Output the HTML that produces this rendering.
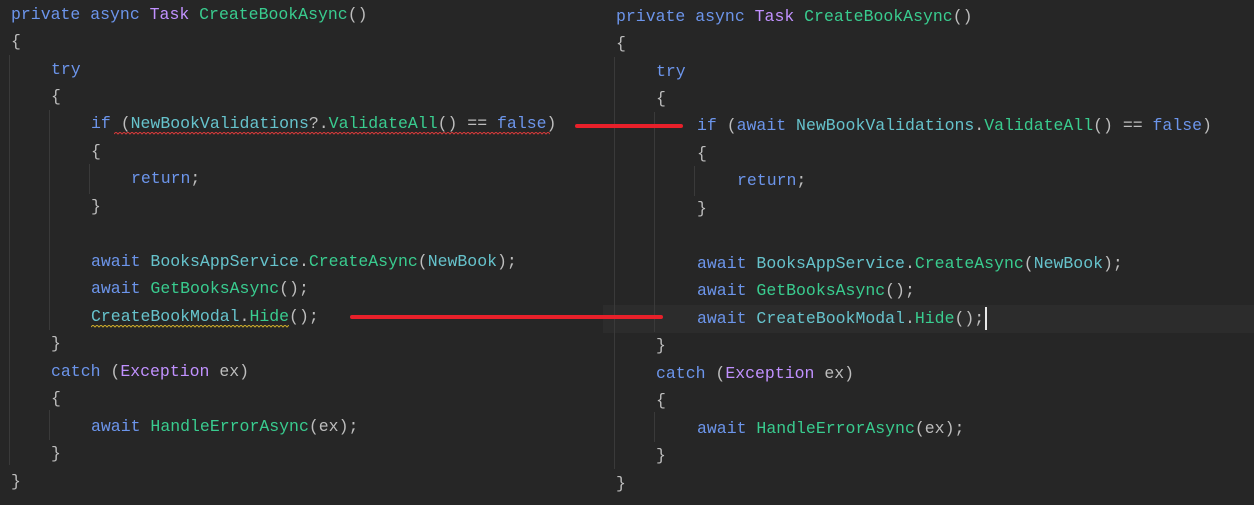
<!DOCTYPE html>
<html><head><meta charset="utf-8"><style>
html,body{margin:0;padding:0;}
body{width:1254px;height:505px;background:#262626;position:relative;overflow:hidden;font-family:"Liberation Mono","DejaVu Sans Mono",monospace;font-size:16.5px;color:#bdbdbd;}
.l{position:absolute;white-space:pre;line-height:20px;height:20px;}
.k{color:#6c95eb}.t{color:#c191ff}.m{color:#39cc8f}.i{color:#66c3cc}
.g{position:absolute;width:1px;background:#3a3a3a;}
.r{position:absolute;height:4px;background:#e8202a;border-radius:2px;}
.sq{position:absolute;height:3px;}
</style></head><body>
<div style="position:absolute;left:603px;top:305px;width:651px;height:28px;background:#2c2c2c"></div>
<!-- guides left -->
<div class="g" style="left:9px;top:55px;height:410px"></div>
<div class="g" style="left:49px;top:110px;height:220px"></div>
<div class="g" style="left:89px;top:164px;height:30px"></div>
<div class="g" style="left:49px;top:410px;height:30px"></div>
<!-- guides right -->
<div class="g" style="left:614px;top:57px;height:412px"></div>
<div class="g" style="left:654px;top:112px;height:220px"></div>
<div class="g" style="left:694px;top:166px;height:30px"></div>
<div class="g" style="left:654px;top:412px;height:30px"></div>

<!-- left -->
<div class="l" style="left:11px;top:5px"><span class="k">private async</span> <span class="t">Task</span> <span class="m">CreateBookAsync</span>()</div>
<div class="l" style="left:11px;top:32px">{</div>
<div class="l" style="left:51px;top:60px"><span class="k">try</span></div>
<div class="l" style="left:51px;top:87px">{</div>
<div class="l" style="left:91px;top:114px"><span class="k">if</span> (<span class="i">NewBookValidations</span>?.<span class="m">ValidateAll</span>() == <span class="k">false</span>)</div>
<div class="l" style="left:91px;top:142px">{</div>
<div class="l" style="left:131px;top:169px"><span class="k">return</span>;</div>
<div class="l" style="left:91px;top:197px">}</div>
<div class="l" style="left:91px;top:252px"><span class="k">await</span> <span class="i">BooksAppService</span>.<span class="m">CreateAsync</span>(<span class="i">NewBook</span>);</div>
<div class="l" style="left:91px;top:279px"><span class="k">await</span> <span class="m">GetBooksAsync</span>();</div>
<div class="l" style="left:91px;top:307px"><span class="i">CreateBookModal</span>.<span class="m">Hide</span>();</div>
<div class="l" style="left:51px;top:334px">}</div>
<div class="l" style="left:51px;top:362px"><span class="k">catch</span> (<span class="t">Exception</span> ex)</div>
<div class="l" style="left:51px;top:389px">{</div>
<div class="l" style="left:91px;top:417px"><span class="k">await</span> <span class="m">HandleErrorAsync</span>(ex);</div>
<div class="l" style="left:51px;top:444px">}</div>
<div class="l" style="left:11px;top:472px">}</div>
<svg class="sq" style="left:114px;top:132px;width:436px" viewBox="0 0 436 3"><polyline fill="none" stroke="#d23a3a" stroke-width="1" points="0,2 2,0 4,2 6,0 8,2 10,0 12,2 14,0 16,2 18,0 20,2 22,0 24,2 26,0 28,2 30,0 32,2 34,0 36,2 38,0 40,2 42,0 44,2 46,0 48,2 50,0 52,2 54,0 56,2 58,0 60,2 62,0 64,2 66,0 68,2 70,0 72,2 74,0 76,2 78,0 80,2 82,0 84,2 86,0 88,2 90,0 92,2 94,0 96,2 98,0 100,2 102,0 104,2 106,0 108,2 110,0 112,2 114,0 116,2 118,0 120,2 122,0 124,2 126,0 128,2 130,0 132,2 134,0 136,2 138,0 140,2 142,0 144,2 146,0 148,2 150,0 152,2 154,0 156,2 158,0 160,2 162,0 164,2 166,0 168,2 170,0 172,2 174,0 176,2 178,0 180,2 182,0 184,2 186,0 188,2 190,0 192,2 194,0 196,2 198,0 200,2 202,0 204,2 206,0 208,2 210,0 212,2 214,0 216,2 218,0 220,2 222,0 224,2 226,0 228,2 230,0 232,2 234,0 236,2 238,0 240,2 242,0 244,2 246,0 248,2 250,0 252,2 254,0 256,2 258,0 260,2 262,0 264,2 266,0 268,2 270,0 272,2 274,0 276,2 278,0 280,2 282,0 284,2 286,0 288,2 290,0 292,2 294,0 296,2 298,0 300,2 302,0 304,2 306,0 308,2 310,0 312,2 314,0 316,2 318,0 320,2 322,0 324,2 326,0 328,2 330,0 332,2 334,0 336,2 338,0 340,2 342,0 344,2 346,0 348,2 350,0 352,2 354,0 356,2 358,0 360,2 362,0 364,2 366,0 368,2 370,0 372,2 374,0 376,2 378,0 380,2 382,0 384,2 386,0 388,2 390,0 392,2 394,0 396,2 398,0 400,2 402,0 404,2 406,0 408,2 410,0 412,2 414,0 416,2 418,0 420,2 422,0 424,2 426,0 428,2 430,0 432,2 434,0 436,2"/></svg>
<svg class="sq" style="left:91px;top:325px;width:198px" viewBox="0 0 198 3"><polyline fill="none" stroke="#c8a82a" stroke-width="1" points="0,2 2,0 4,2 6,0 8,2 10,0 12,2 14,0 16,2 18,0 20,2 22,0 24,2 26,0 28,2 30,0 32,2 34,0 36,2 38,0 40,2 42,0 44,2 46,0 48,2 50,0 52,2 54,0 56,2 58,0 60,2 62,0 64,2 66,0 68,2 70,0 72,2 74,0 76,2 78,0 80,2 82,0 84,2 86,0 88,2 90,0 92,2 94,0 96,2 98,0 100,2 102,0 104,2 106,0 108,2 110,0 112,2 114,0 116,2 118,0 120,2 122,0 124,2 126,0 128,2 130,0 132,2 134,0 136,2 138,0 140,2 142,0 144,2 146,0 148,2 150,0 152,2 154,0 156,2 158,0 160,2 162,0 164,2 166,0 168,2 170,0 172,2 174,0 176,2 178,0 180,2 182,0 184,2 186,0 188,2 190,0 192,2 194,0 196,2 198,0"/></svg>

<!-- right -->
<div class="l" style="left:616px;top:7px"><span class="k">private async</span> <span class="t">Task</span> <span class="m">CreateBookAsync</span>()</div>
<div class="l" style="left:616px;top:34px">{</div>
<div class="l" style="left:656px;top:62px"><span class="k">try</span></div>
<div class="l" style="left:656px;top:89px">{</div>
<div class="l" style="left:697px;top:116px"><span class="k">if</span> (<span class="k">await</span> <span class="i">NewBookValidations</span>.<span class="m">ValidateAll</span>() == <span class="k">false</span>)</div>
<div class="l" style="left:697px;top:144px">{</div>
<div class="l" style="left:737px;top:171px"><span class="k">return</span>;</div>
<div class="l" style="left:697px;top:199px">}</div>
<div class="l" style="left:697px;top:254px"><span class="k">await</span> <span class="i">BooksAppService</span>.<span class="m">CreateAsync</span>(<span class="i">NewBook</span>);</div>
<div class="l" style="left:697px;top:281px"><span class="k">await</span> <span class="m">GetBooksAsync</span>();</div>
<div class="l" style="left:697px;top:309px"><span class="k">await</span> <span class="i">CreateBookModal</span>.<span class="m">Hide</span>();</div>
<div style="position:absolute;left:985px;top:307px;width:2px;height:23px;background:#e8e8e8"></div>
<div class="l" style="left:656px;top:336px">}</div>
<div class="l" style="left:656px;top:364px"><span class="k">catch</span> (<span class="t">Exception</span> ex)</div>
<div class="l" style="left:656px;top:391px">{</div>
<div class="l" style="left:697px;top:419px"><span class="k">await</span> <span class="m">HandleErrorAsync</span>(ex);</div>
<div class="l" style="left:656px;top:446px">}</div>
<div class="l" style="left:616px;top:474px">}</div>

<div class="r" style="left:575px;top:124px;width:108px"></div>
<div class="r" style="left:350px;top:315px;width:313px"></div>
</body></html>
